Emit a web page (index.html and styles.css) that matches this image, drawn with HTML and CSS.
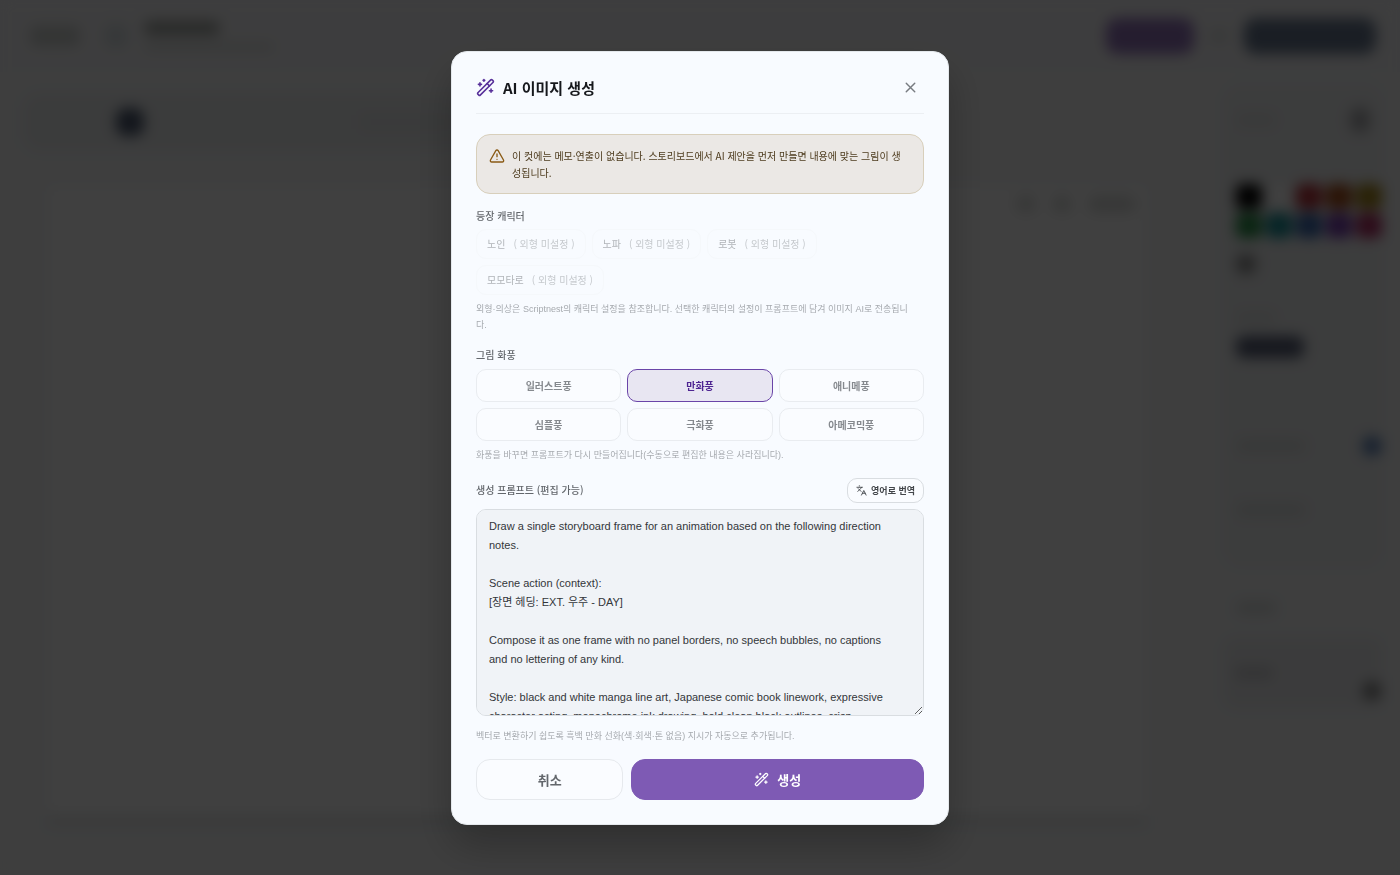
FILE: index.html
```html
<!DOCTYPE html>
<html lang="ko">
<head>
    <meta charset="UTF-8">
    <meta name="viewport" content="width=device-width, initial-scale=1.0">
    <title>AI 이미지 생성</title>
    <link rel="stylesheet" href="styles.css">
</head>
<body>
    <!-- Editor behind the dialog -->
    <div class="editor" aria-hidden="true">
        <div class="topbar">
            <span class="bar back"></span>
            <span class="logo"></span>
            <div class="titles">
                <span class="bar name"></span>
                <span class="bar path"></span>
            </div>
            <span class="pill pill-ai"></span>
            <span class="bar dot"></span>
            <span class="pill pill-save"></span>
        </div>
        <div class="workspace">
            <div class="stage">
                <div class="toolbar">
                    <span class="tool"></span>
                    <span class="zoom"></span>
                </div>
                <div class="canvas">
                    <div class="canvas-tools"><span></span><span></span><span class="wide"></span></div>
                </div>
            </div>
            <div class="sidebar">
                <div class="panel">
                    <div class="panel-head"><span class="bar short"></span><span class="knob"></span></div>
                    <div class="swatches">
                        <span class="black"></span><span class="white"></span><span class="red"></span><span class="orange"></span><span class="yellow"></span>
                        <span class="green"></span><span class="teal"></span><span class="blue"></span><span class="violet"></span><span class="pink"></span>
                    </div>
                    <span class="current"></span>
                    <span class="bar short"></span>
                    <span class="pill-tab"></span>
                    <div class="slider"><span class="bar mid"></span><span class="thumb"></span></div>
                    <span class="bar mid"></span>
                </div>
                <span class="bar layer-title"></span>
                <div class="layer"><span class="bar short dark"></span><span class="knob dark"></span></div>
            </div>
        </div>
    </div>

    <div class="overlay">
        <div class="modal" role="dialog" aria-modal="true" aria-labelledby="modal-title">
            <div class="modal-header">
                <svg class="icon icon-title" viewBox="0 0 24 24"><use href="#wand"/></svg>
                <h2 id="modal-title">AI 이미지 생성</h2>
                <button type="button" class="close" aria-label="닫기">
                    <svg class="icon icon-close" viewBox="0 0 24 24"><path d="M18 6 6 18M6 6l12 12"/></svg>
                </button>
            </div>

            <div class="notice">
                <svg class="icon icon-warn" viewBox="0 0 24 24"><path d="m21.73 18-8-14a2 2 0 0 0-3.48 0l-8 14A2 2 0 0 0 4 21h16a2 2 0 0 0 1.73-3"/><path d="M12 9v4M12 17h.01"/></svg>
                <p>이 컷에는 메모·연출이 없습니다. 스토리보드에서 AI 제안을 먼저 만들면 내용에 맞는 그림이 생성됩니다.</p>
            </div>

            <!-- Characters -->
            <div class="section">
                <h3 class="label">등장 캐릭터</h3>
                <div class="chips">
                    <button type="button" class="chip" disabled>노인 <span>( 외형 미설정 )</span></button>
                    <button type="button" class="chip" disabled>노파 <span>( 외형 미설정 )</span></button>
                    <button type="button" class="chip" disabled>로봇 <span>( 외형 미설정 )</span></button>
                    <button type="button" class="chip" disabled>모모타로 <span>( 외형 미설정 )</span></button>
                </div>
                <p class="hint">외형·의상은 Scriptnest의 캐릭터 설정을 참조합니다. 선택한 캐릭터의 설정이 프롬프트에 담겨 이미지 AI로 전송됩니다.</p>
            </div>

            <!-- Art style -->
            <div class="section">
                <h3 class="label">그림 화풍</h3>
                <div class="styles">
                    <button type="button" class="style">일러스트풍</button>
                    <button type="button" class="style active" aria-pressed="true">만화풍</button>
                    <button type="button" class="style">애니메풍</button>
                    <button type="button" class="style">심플풍</button>
                    <button type="button" class="style">극화풍</button>
                    <button type="button" class="style">아메코믹풍</button>
                </div>
                <p class="hint">화풍을 바꾸면 프롬프트가 다시 만들어집니다(수동으로 편집한 내용은 사라집니다).</p>
            </div>

            <!-- Prompt -->
            <div class="section">
                <div class="prompt-head">
                    <label class="label" for="prompt">생성 프롬프트 (편집 가능)</label>
                    <button type="button" class="translate">
                        <svg class="icon icon-translate" viewBox="0 0 24 24"><path d="m5 8 6 6M4 14l6-6 2-3M2 5h12M7 2h1M22 22l-5-10-5 10M14 18h6"/></svg>
                        영어로 번역
                    </button>
                </div>
                <textarea id="prompt" class="prompt" spellcheck="false">Draw a single storyboard frame for an animation based on the following direction notes.

Scene action (context):
[장면 헤딩: EXT. 우주 - DAY]

Compose it as one frame with no panel borders, no speech bubbles, no captions and no lettering of any kind.

Style: black and white manga line art, Japanese comic book linework, expressive character acting, monochrome ink drawing, bold clean black outlines, crisp</textarea>
                <p class="hint">벡터로 변환하기 쉽도록 흑백 만화 선화(색·회색·톤 없음) 지시가 자동으로 추가됩니다.</p>
            </div>

            <div class="actions">
                <button type="button" class="btn cancel">취소</button>
                <button type="button" class="btn generate">
                    <svg class="icon icon-generate" viewBox="0 0 24 24"><use href="#wand"/></svg>
                    생성
                </button>
            </div>
        </div>
    </div>

    <svg class="sprite" aria-hidden="true">
        <symbol id="wand" viewBox="0 0 24 24">
            <path d="m21.64 3.64-1.28-1.28a1.21 1.21 0 0 0-1.72 0L2.36 18.64a1.21 1.21 0 0 0 0 1.72l1.28 1.28a1.2 1.2 0 0 0 1.72 0L21.64 5.36a1.2 1.2 0 0 0 0-1.72"/>
            <path d="m14 7 3 3M5 6v4M7 8H3M10 2v2M11 3H9M19 14v4M21 16h-4"/>
        </symbol>
    </svg>
</body>
</html>
```
FILE: styles.css
```css
* { box-sizing: border-box; }
body {
    margin: 0;
    height: 100vh;
    overflow: hidden;
    background: #f5f6f7;
    font-family: "Noto Sans CJK KR", sans-serif;
}
h2, h3, p { margin: 0; }
button { font-family: inherit; cursor: pointer; }
.sprite { display: none; }

/* Editor */
.editor { height: 100vh; display: flex; flex-direction: column; }
.topbar { display: flex; align-items: center; gap: 16px; height: 72px; padding: 0 24px 0 30px; background: #f4f4f6; }
.bar { display: block; height: 12px; border-radius: 6px; background: #d8dcda; }
.back { width: 50px; height: 20px; margin-right: 8px; background: #ccd0ce; }
.logo { width: 24px; height: 24px; border-radius: 8px; background: #d8e0e4; }
.titles { display: grid; gap: 8px; flex: 1; }
.name { width: 76px; height: 14px; background: #a0a4a0; }
.path { width: 130px; height: 8px; background: #d8dcda; }
.pill { height: 36px; border-radius: 12px; }
.pill-ai { width: 88px; background: #9474bc; }
.dot { width: 18px; }
.pill-save { width: 132px; background: #687890; }
.workspace { display: flex; flex: 1; min-height: 0; }
.stage { flex: 1; display: flex; flex-direction: column; padding: 22px 40px 50px 24px; }
.toolbar { display: flex; align-items: center; justify-content: space-between; width: 80%; height: 56px; padding: 0 40px 0 92px; border-radius: 16px; background: #ebedee; }
.tool { width: 28px; height: 28px; border-radius: 10px; background: #4c5870; }
.zoom { width: 500px; height: 14px; margin-right: 40px; background: #e4e6e7; }
.canvas { flex: 1; margin: 36px 24px 0; border-bottom: 10px solid #e4e6e6; background: #fff; }
.canvas-tools { display: flex; justify-content: flex-end; gap: 16px; padding: 10px; }
.canvas-tools span { width: 20px; height: 16px; border-radius: 8px; background: #d8dad8; }
.canvas-tools .wide { width: 48px; }
.sidebar { width: 190px; padding: 14px 18px 14px 14px; }
.panel { height: 480px; padding: 14px 0 14px 12px; border-radius: 16px; background: #eff1f2; }
.panel-head, .slider, .layer { display: flex; align-items: center; justify-content: space-between; }
.panel-head { height: 40px; padding-right: 12px; }
.short { width: 40px; background: #e2e5e4; }
.mid { width: 70px; background: #dcdfde; }
.knob { width: 20px; height: 26px; border-radius: 10px; background: #acacb0; }
.swatches { display: grid; grid-template-columns: repeat(5, 1fr); gap: 4px; margin-top: 44px; }
.swatches span { height: 25px; border-radius: 6px; }
.black { background: #000; }
.white { background: #fff; }
.red { background: #b83038; }
.orange { background: #a84c18; }
.yellow { background: #a48418; }
.green { background: #289048; }
.teal { background: #189098; }
.blue { background: #3868b0; }
.violet { background: #783cb0; }
.pink { background: #b02c64; }
.current { display: block; width: 20px; height: 20px; margin: 16px 0 38px; border-radius: 8px; background: #909090; }
.pill-tab { display: block; width: 68px; height: 22px; margin: 12px 0 72px; border-radius: 8px; background: #586078; }
.slider { height: 32px; margin-bottom: 42px; }
.thumb { width: 20px; height: 20px; border-radius: 10px; background: #5880b8; }
.layer-title { width: 40px; margin: 36px 0 24px 12px; }
.layer { height: 70px; padding: 0 0 0 10px; border-radius: 12px; background: #ebecee; }
.dark { background: #ccccd0; }
.layer .knob { height: 20px; margin-top: 36px; background: #888; }

/* Dialog */
.overlay {
    position: fixed;
    inset: 0;
    display: flex;
    align-items: center;
    justify-content: center;
    padding: 16px;
    background: rgba(0, 0, 0, 0.75);
    backdrop-filter: blur(7px);
}
.modal {
    width: 100%;
    max-width: 498px;
    padding: 22px 24px 24px;
    border: 1px solid #e4e8ec;
    border-radius: 16px;
    background: #f8fbff;
    box-shadow: 0 20px 40px rgba(0, 0, 0, 0.25);
}
.icon { flex: none; fill: none; stroke: currentColor; stroke-width: 2; stroke-linecap: round; stroke-linejoin: round; }
.modal-header {
    display: flex;
    align-items: center;
    gap: 8px;
    padding-bottom: 12px;
    margin-bottom: 20px;
    border-bottom: 1px solid #eceff3;
}
.modal-header h2 { flex: 1; font-size: 15px; line-height: 27px; font-weight: 700; color: #16181c; }
.icon-title { width: 19px; height: 19px; color: #58309a; }
.close { display: flex; padding: 5px; border: 0; background: none; color: #777b80; }
.icon-close { width: 17px; height: 17px; }
.notice {
    display: flex;
    gap: 7px;
    padding: 12px 16px 12px 12px;
    margin-bottom: 15px;
    border: 1px solid #d8cfbb;
    border-radius: 14px;
    background: #ebe8e5;
}
.notice p { font-size: 10px; line-height: 17px; color: #4c3a1c; }
.icon-warn { width: 16px; height: 16px; margin-top: 1px; color: #8a5a14; }
.section { margin-bottom: 15px; }
.label { display: block; font-size: 10px; line-height: 14px; font-weight: 500; color: #63676c; }
.hint { margin-top: 6px; padding-right: 8px; font-family: "Liberation Sans", "Noto Sans CJK KR", sans-serif; font-size: 9px; line-height: 16px; color: #a6aaaf; }

.chips { display: flex; flex-wrap: wrap; gap: 6px; margin-top: 6px; }
.chip {
    display: flex;
    align-items: center;
    gap: 8px;
    height: 30px;
    padding: 0 10px;
    border: 1px solid #f5f8fb;
    border-radius: 10px;
    background: none;
    font-size: 10px;
    color: #b0b4b8;
    cursor: default;
}
.chip span { color: #c6cace; }

.styles { display: grid; grid-template-columns: repeat(3, 1fr); gap: 6px; margin-top: 7px; }
.style { height: 33px; padding: 0; border: 1px solid #e9ecf0; border-radius: 10px; background: #fafcff; font-size: 10px; font-weight: 700; color: #85898e; }
.style.active { border-color: #6a45a8; background: #e8e6f2; color: #4e2592; }

.prompt-head { display: flex; align-items: center; justify-content: space-between; margin-bottom: 6px; }
.translate {
    display: flex;
    align-items: center;
    gap: 4px;
    height: 25px;
    padding: 0 8px;
    border: 1px solid #d9dde1;
    border-radius: 10px;
    background: #fafcff;
    font-size: 9px;
    font-weight: 700;
    color: #43464a;
}
.icon-translate { width: 11px; height: 11px; }
.prompt {
    display: block;
    width: 100%;
    height: 207px;
    padding: 7px 24px 7px 12px;
    border: 1px solid #d9dde1;
    border-radius: 10px;
    background: #f0f3f7;
    font-family: "Liberation Sans", "Noto Sans CJK KR", sans-serif;
    font-size: 11px;
    line-height: 19px;
    color: #33363a;
    resize: vertical;
    scrollbar-width: none;
}
.section .prompt + .hint { margin-top: 12px; }

.actions { display: flex; gap: 8px; }
.btn {
    display: flex;
    align-items: center;
    justify-content: center;
    gap: 8px;
    height: 41px;
    padding: 0;
    border: 1px solid #e6e9ed;
    border-radius: 14px;
    font-size: 13px;
    font-weight: 700;
}
.cancel { flex: 1; background: #fafcff; color: #63676c; }
.generate { flex: 2; border-color: #7e5ab4; background: #7e5ab4; color: #fff; }
.icon-generate { width: 15px; height: 15px; }
```
